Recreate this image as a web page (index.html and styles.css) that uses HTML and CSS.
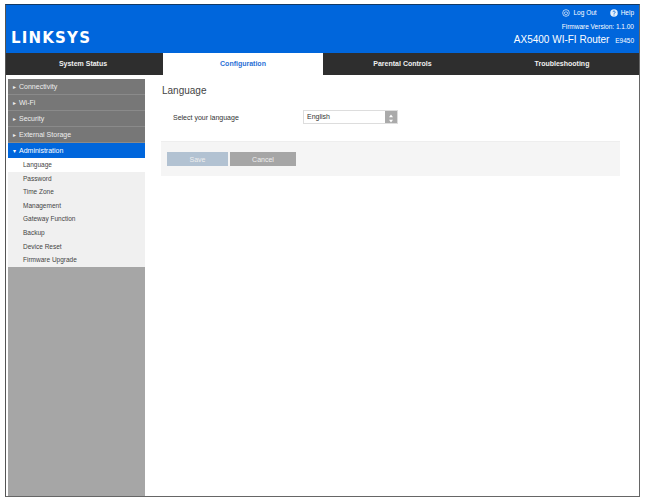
FILE: index.html
```html
<!DOCTYPE html>
<html lang="en">
<head>
  <meta charset="UTF-8">
  <meta name="viewport" content="width=device-width, initial-scale=1.0">
  <link rel="stylesheet" href="styles.css">
  <title>Linksys Router</title>
</head>
<body>
  <div class="frame">
    <header class="header">
      <div class="logo">LINKSYS</div>
      <div class="header-right">
        <div class="links">
          <span class="link">
            <svg class="icon" viewBox="0 0 12 12"><circle cx="6" cy="6" r="5" fill="none" stroke="#fff" stroke-width="1"/><path d="M6 3V6.2M4.2 4.4a2.5 2.5 0 1 0 3.6 0" fill="none" stroke="#fff" stroke-width="0.9"/></svg>
            Log Out
          </span>
          <span class="link">
            <svg class="icon" viewBox="0 0 12 12"><circle cx="6" cy="6" r="5.6" fill="#e6f0fb"/><path d="M4.3 4.7a1.7 1.7 0 1 1 2.6 1.5c-.6.3-.9.6-.9 1.3" fill="none" stroke="#0066dc" stroke-width="1.3"/><rect x="5.3" y="8.3" width="1.4" height="1.4" fill="#0066dc"/></svg>
            Help
          </span>
        </div>
        <div class="firmware">Firmware Version: 1.1.00</div>
        <div class="model">AX5400 WI-FI Router <small>E9450</small></div>
      </div>
    </header>

    <nav class="tabs">
      <div class="tab first">System Status</div>
      <div class="tab active">Configuration</div>
      <div class="tab">Parental Controls</div>
      <div class="tab last">Troubleshooting</div>
    </nav>

    <div class="main">
      <aside class="sidebar">
        <div class="menu-item"><span class="arrow">&#9656;</span>Connectivity</div>
        <div class="menu-item"><span class="arrow">&#9656;</span>Wi-Fi</div>
        <div class="menu-item"><span class="arrow">&#9656;</span>Security</div>
        <div class="menu-item"><span class="arrow">&#9656;</span>External Storage</div>
        <div class="menu-item open"><span class="arrow">&#9662;</span>Administration</div>
        <div class="submenu">
          <div class="sub-item current">Language</div>
          <div class="sub-item">Password</div>
          <div class="sub-item">Time Zone</div>
          <div class="sub-item">Management</div>
          <div class="sub-item">Gateway Function</div>
          <div class="sub-item">Backup</div>
          <div class="sub-item">Device Reset</div>
          <div class="sub-item">Firmware Upgrade</div>
        </div>
      </aside>

      <section class="content">
        <h1 class="title">Language</h1>
        <div class="field">
          <label class="field-label">Select your language</label>
          <div class="select">
            <span class="select-value">English</span>
            <span class="select-arrows">
              <svg viewBox="0 0 12 13" width="12" height="13"><path d="M6 2.5L8 5.2H4zM6 10.5L4 7.8H8z" fill="#fff"/></svg>
            </span>
          </div>
        </div>
        <div class="actions">
          <button class="button save">Save</button>
          <button class="button cancel">Cancel</button>
        </div>
      </section>
    </div>
  </div>
</body>
</html>
```

FILE: styles.css
```css
body {
  font-family: "Liberation Sans", Arial, sans-serif;
  margin: 0;
  padding: 0;
  background-color: #fff;
}

.frame {
  width: 633px;
  height: 491px;
  margin: 4px 0 0 5px;
  border-top: 1px solid #123a66;
  border-left: 1px solid #555;
  border-right: 1px solid #666;
  border-bottom: 1px solid #666;
  display: flex;
  flex-direction: column;
}

.header {
  height: 48px;
  background-color: #0066dc;
  color: #fff;
  display: flex;
  justify-content: space-between;
  align-items: flex-end;
  flex-shrink: 0;
}

.logo {
  font-family: "DejaVu Sans", sans-serif;
  font-weight: bold;
  font-size: 15px;
  line-height: 15px;
  letter-spacing: 1.2px;
  margin: 0 0 7px 5px;
}

.header-right {
  text-align: right;
  padding: 0 5px 6px 0;
}

.links {
  font-size: 6.5px;
  line-height: 10px;
  display: flex;
  justify-content: flex-end;
  gap: 13px;
  align-items: center;
}

.link {
  display: flex;
  align-items: center;
  gap: 3px;
}

.icon {
  width: 8px;
  height: 8px;
}

.firmware {
  font-size: 6.5px;
  line-height: 9px;
  margin-top: 4px;
}

.model {
  font-size: 10px;
  line-height: 13px;
  margin-top: 2px;
}

.model small {
  font-size: 6.5px;
  margin-left: 3px;
}

.tabs {
  display: grid;
  grid-template-columns: 157px 160px 159px 157px;
  height: 22px;
  background-color: #2e2e2e;
  flex-shrink: 0;
}

.tab {
  color: #f0f0f0;
  font-size: 7px;
  font-weight: bold;
  line-height: 22px;
  text-align: center;
}

.tab.first {
  padding-right: 3px;
}

.tab.last {
  padding-left: 3px;
}

.tab.active {
  background-color: #fff;
  color: #2a6fd6;
}

.main {
  flex: 1;
  display: flex;
  min-height: 0;
}

.sidebar {
  width: 137px;
  margin: 4px 0 0 2px;
  background-color: #a6a6a6;
  flex-shrink: 0;
}

.menu-item {
  height: 15px;
  line-height: 15px;
  background-color: #777;
  color: #eee;
  font-size: 7px;
  border-bottom: 1px solid #8a8a8a;
  padding-left: 5px;
}

.arrow {
  display: inline-block;
  width: 6px;
  font-size: 6px;
}

.menu-item.open {
  background-color: #0066dc;
  color: #fff;
  border-bottom: none;
}

.submenu {
  background-color: #f0f0f0;
}

.sub-item {
  height: 13.6px;
  line-height: 14px;
  font-size: 6.5px;
  color: #444;
  padding-left: 15px;
}

.sub-item.current {
  background-color: #fff;
}

.content {
  flex: 1;
  padding: 9px 19px 0 17px;
}

.title {
  font-size: 10px;
  font-weight: normal;
  color: #444;
  line-height: 14px;
  margin: 0;
}

.field {
  display: flex;
  align-items: center;
  margin: 12px 0 0 11px;
  height: 14px;
}

.field-label {
  width: 130px;
  font-size: 7px;
  color: #333;
}

.select {
  width: 93px;
  height: 12px;
  display: flex;
  justify-content: space-between;
  border: 1px solid #ddd;
  background-color: #fff;
}

.select-value {
  font-size: 7px;
  line-height: 12px;
  color: #333;
  padding-left: 3px;
}

.select-arrows {
  width: 12px;
  height: 12px;
  background-color: #aaa;
}

.actions {
  margin: 17px 0 0 -1px;
  height: 35px;
  background-color: #f5f5f5;
  border-top: 1px solid #eee;
  display: flex;
  align-items: flex-start;
  gap: 2px;
  padding: 10px 0 0 6px;
  box-sizing: border-box;
}

.button {
  height: 14px;
  border: none;
  padding: 0;
  color: #eee;
  font-family: inherit;
  font-size: 7px;
}

.save {
  width: 61px;
  background-color: #b2c2d2;
}

.cancel {
  width: 66px;
  background-color: #a6a6a6;
}
```
